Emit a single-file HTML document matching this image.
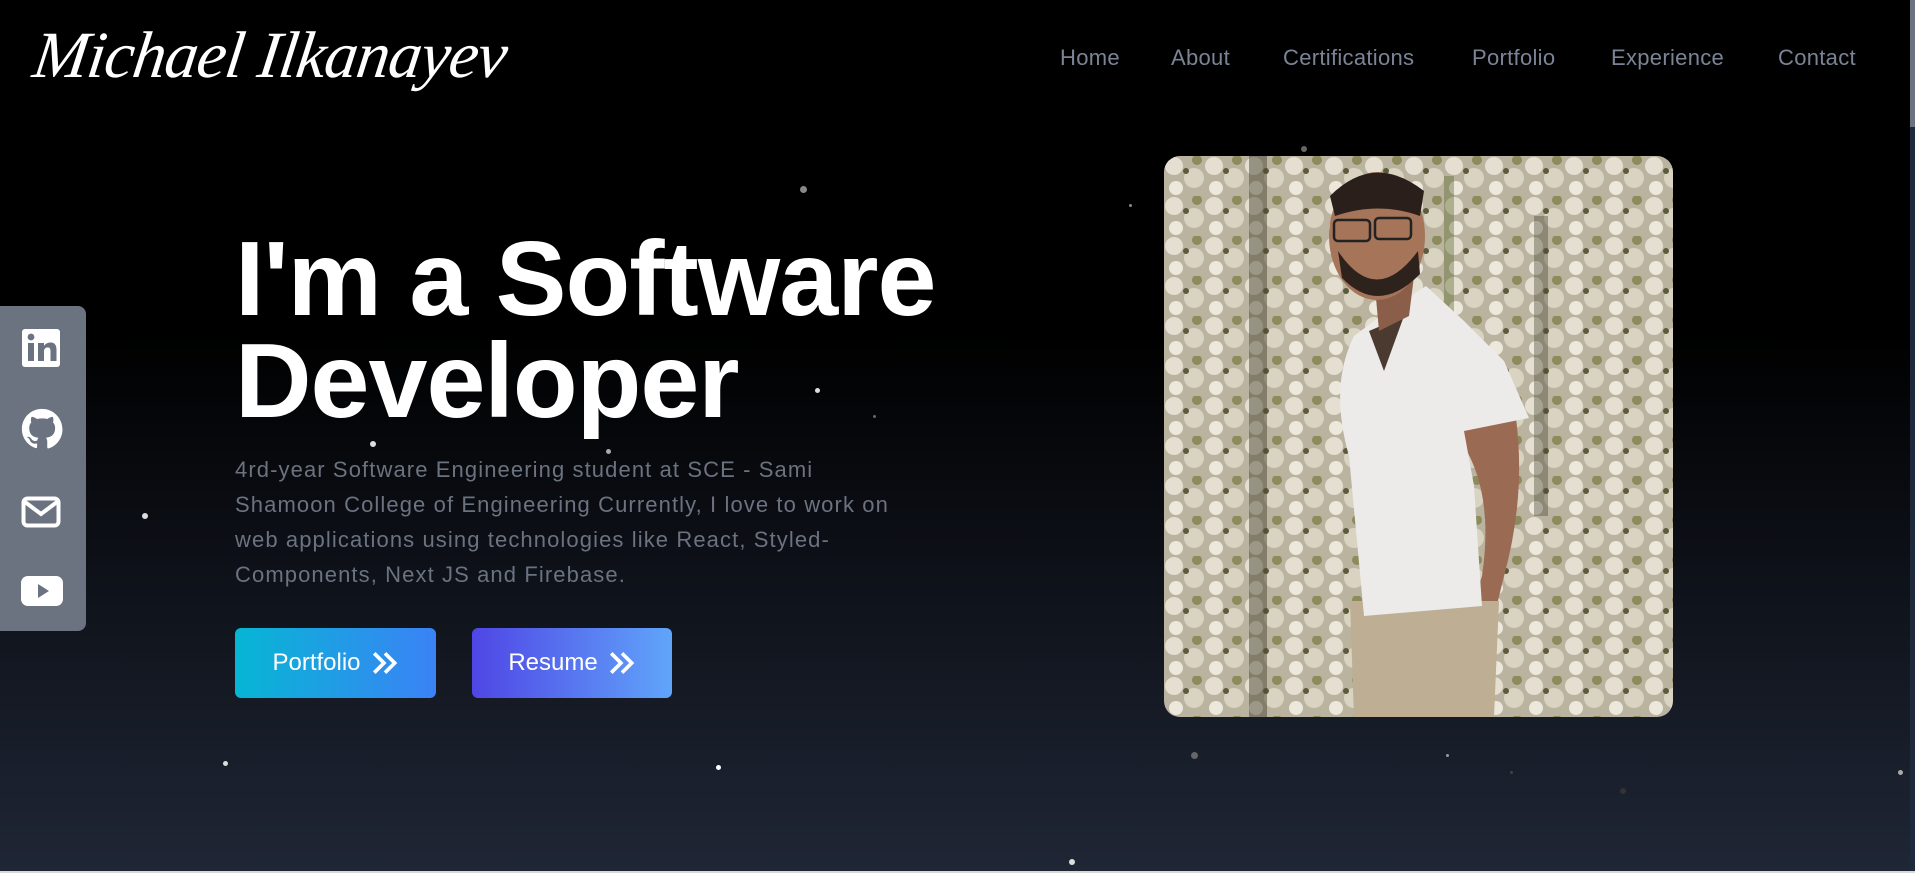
<!DOCTYPE html>
<html><head><meta charset="utf-8">
<style>
*{margin:0;padding:0;box-sizing:border-box}
html,body{width:1915px;height:873px;overflow:hidden}
body{background:linear-gradient(180deg,#000 0px,#000 330px,#0f131b 600px,#1f2635 872px);font-family:"Liberation Sans",sans-serif;position:relative}
.logo{position:absolute;left:34px;top:18px;font-family:"Liberation Serif",serif;font-style:italic;font-size:66px;color:#fff;letter-spacing:-1px;transform:skewX(-8deg)}
.nav{position:absolute;top:45px;font-size:22px;color:#7b8496;letter-spacing:.3px}
.side{position:absolute;left:0;top:306px;width:86px;height:325px;background:#6b7280;border-radius:0 8px 8px 0}
.side svg{position:absolute;left:21px}
h1{position:absolute;left:235px;top:228px;font-size:106px;line-height:102px;color:#fff;font-weight:bold;letter-spacing:-1px}
p.d{position:absolute;left:235px;top:452px;width:670px;font-size:22px;line-height:35px;color:#6b7280;letter-spacing:1.1px}
.btn{position:absolute;top:628px;height:70px;border-radius:6px;color:#fff;font-size:24px;display:flex;align-items:center;justify-content:center;gap:10px}
.dot{position:absolute;border-radius:50%;background:#ddd}
.photo{position:absolute;left:1164px;top:156px;width:509px;height:561px;border-radius:16px;overflow:hidden}
.sb{position:absolute;right:0;top:0;width:5px;height:873px;background:#1e293b}
</style></head><body>
<div class="logo">Michael Ilkanayev</div>
<div class="nav" style="left:1060px">Home</div>
<div class="nav" style="left:1171px">About</div>
<div class="nav" style="left:1283px">Certifications</div>
<div class="nav" style="left:1472px">Portfolio</div>
<div class="nav" style="left:1611px">Experience</div>
<div class="nav" style="left:1778px">Contact</div>
<div class="sb"><div style="height:127px;background:#6b7280"></div></div>

<div class="side">
<svg style="top:22px" width="40" height="40" viewBox="0 0 40 40"><rect x="1" y="1" width="38" height="38" rx="3" fill="#fff"/><rect x="7" y="15" width="6" height="18" fill="#6b7280"/><circle cx="10" cy="9" r="3.4" fill="#6b7280"/><path d="M17 15h6v3c1.5-2.5 4-3.5 6.5-3.5 4.5 0 6 3 6 7.5V33h-6v-10c0-2.2-.8-3.6-2.8-3.6s-3.7 1.5-3.7 3.8V33h-6z" fill="#6b7280"/></svg>
<svg style="top:102px" width="42" height="42" viewBox="0 0 24 24"><path fill="#fff" d="M12 .5C5.6.5.5 5.6.5 12c0 5.1 3.3 9.4 7.9 10.9.6.1.8-.3.8-.6v-2c-3.2.7-3.900-1.500-3.900-1.500-.5-1.300-1.300-1.700-1.300-1.700-1-.7.1-.7.1-.7 1.2.1 1.8 1.2 1.8 1.2 1 1.8 2.7 1.3 3.4 1 .1-.8.4-1.3.7-1.6-2.6-.3-5.3-1.3-5.3-5.7 0-1.3.5-2.3 1.2-3.1-.1-.3-.5-1.5.1-3.1 0 0 1-.3 3.2 1.2a11 11 0 0 1 5.8 0c2.2-1.5 3.2-1.2 3.2-1.2.6 1.6.2 2.8.1 3.1.7.8 1.2 1.8 1.2 3.1 0 4.4-2.7 5.4-5.3 5.7.4.4.8 1.1.8 2.2v3.3c0 .3.2.7.8.6 4.6-1.5 7.9-5.8 7.9-10.9C23.5 5.6 18.4.5 12 .5z"/></svg>
<svg style="top:190px" width="40" height="32" viewBox="0 0 40 32"><rect x="2.5" y="2.5" width="35" height="27" rx="4" fill="none" stroke="#fff" stroke-width="4"/><path d="M4 6l16 12L36 6" fill="none" stroke="#fff" stroke-width="4"/></svg>
<svg style="top:270px" width="42" height="30" viewBox="0 0 42 30"><rect x="0" y="0" width="42" height="30" rx="7" fill="#fff"/><path d="M17 8v14l11-7z" fill="#6b7280"/></svg>
</div>

<h1>I'm a Software<br>Developer</h1>
<p class="d">4rd-year Software Engineering student at SCE - Sami Shamoon College of Engineering Currently, I love to work on web applications using technologies like React, Styled-Components, Next JS and Firebase.</p>
<div class="btn" style="left:235px;width:201px;background:linear-gradient(90deg,#06b6d4,#3b82f6)">Portfolio <svg width="28" height="26" viewBox="0 0 26 24"><path d="M3 3l9 9-9 9M13 3l9 9-9 9" fill="none" stroke="#fff" stroke-width="3.4"/></svg></div>
<div class="btn" style="left:472px;width:200px;background:linear-gradient(90deg,#4f46e5,#60a5fa)">Resume <svg width="28" height="26" viewBox="0 0 26 24"><path d="M3 3l9 9-9 9M13 3l9 9-9 9" fill="none" stroke="#fff" stroke-width="3.4"/></svg></div>

<div class="photo">
<svg width="509" height="561" viewBox="0 0 509 561">
<defs>
<pattern id="fl" width="40" height="40" patternUnits="userSpaceOnUse">
<rect width="40" height="40" fill="#b9b39f"/>
<circle cx="10" cy="10" r="9" fill="#e4dfd0"/><circle cx="30" cy="22" r="10" fill="#d9d3c2"/><circle cx="12" cy="32" r="7" fill="#ece8dc"/><circle cx="33" cy="4" r="5" fill="#8c8b5c"/><circle cx="22" cy="15" r="3" fill="#5b5a3a"/>
</pattern>
</defs>
<rect width="509" height="561" fill="url(#fl)"/>
<rect x="85" y="0" width="18" height="561" fill="#4a4834" opacity=".5"/>
<rect x="370" y="60" width="14" height="300" fill="#4a4834" opacity=".4"/>
<rect x="280" y="20" width="10" height="200" fill="#5a6a2a" opacity=".4"/>
<path d="M300 262 L352 262 Q362 340 340 420 L318 510 L290 505 L318 420 Q330 340 300 290z" fill="#9a6a52"/>
<path d="M186 445 L335 445 L330 561 L190 561z" fill="#bdae94"/>
<path d="M190 180 L230 150 L262 130 L300 165 L340 205 L365 262 L300 275 L310 330 L318 450 L200 460 L185 300 Q165 230 190 180z" fill="#ecebea"/>
<path d="M205 175 L240 160 L220 215z" fill="#4a3a30"/>
<path d="M210 120 L250 120 L245 160 L215 175z" fill="#8a5e48"/>
<ellipse cx="213" cy="80" rx="48" ry="64" fill="#a57459"/>
<path d="M166 40 Q210 -4 260 35 L256 60 Q215 45 171 60z" fill="#2a1f1a"/>
<path d="M174 95 Q212 152 254 95 L256 118 Q215 160 178 122z" fill="#2e221c"/>
<rect x="170" y="64" width="36" height="21" rx="4" fill="none" stroke="#222" stroke-width="2.5"/>
<rect x="211" y="62" width="36" height="21" rx="4" fill="none" stroke="#222" stroke-width="2.5"/>
</svg>
</div>

<div class="dot" style="left:800px;top:186px;width:7px;height:7px;background:#888"></div>
<div class="dot" style="left:1301px;top:146px;width:6px;height:6px;background:#666"></div>
<div class="dot" style="left:1129px;top:204px;width:3px;height:3px;background:#888"></div>
<div class="dot" style="left:815px;top:388px;width:5px;height:5px"></div>
<div class="dot" style="left:873px;top:415px;width:3px;height:3px;background:#666"></div>
<div class="dot" style="left:370px;top:441px;width:6px;height:6px"></div>
<div class="dot" style="left:606px;top:449px;width:5px;height:5px;background:#aaa"></div>
<div class="dot" style="left:142px;top:513px;width:6px;height:6px"></div>
<div class="dot" style="left:223px;top:761px;width:5px;height:5px"></div>
<div class="dot" style="left:716px;top:765px;width:5px;height:5px;background:#fff"></div>
<div class="dot" style="left:1191px;top:752px;width:7px;height:7px;background:#666"></div>
<div class="dot" style="left:1446px;top:754px;width:3px;height:3px;background:#999"></div>
<div class="dot" style="left:1510px;top:771px;width:3px;height:3px;background:#444"></div>
<div class="dot" style="left:1898px;top:770px;width:5px;height:5px;background:#aaa"></div>
<div class="dot" style="left:1620px;top:788px;width:6px;height:6px;background:#333"></div>
<div class="dot" style="left:1069px;top:859px;width:6px;height:6px"></div>
<div style="position:absolute;left:0;top:871px;width:1915px;height:2px;background:#d8d8d8"></div>
</body></html>
